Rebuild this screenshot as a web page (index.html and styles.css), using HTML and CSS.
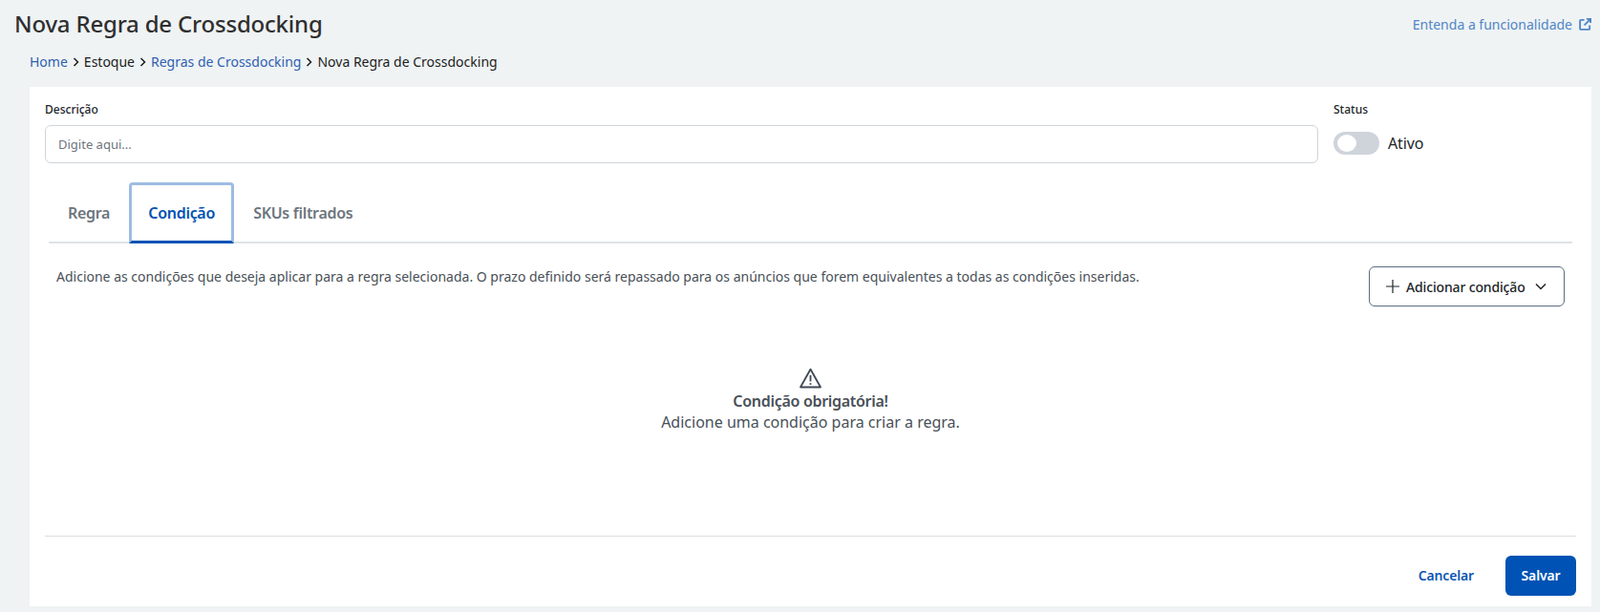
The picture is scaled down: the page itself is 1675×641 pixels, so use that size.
FILE: index.html
```html
<!DOCTYPE html>
<html lang="pt-BR">
<head>
<meta charset="utf-8">
<title>Nova Regra de Crossdocking</title>
<link rel="stylesheet" href="styles.css">
</head>
<body>
<header class="top">
  <h1 class="title">Nova Regra de Crossdocking</h1>
  <a class="help" href="#">Entenda a funcionalidade
    <svg class="help-icon" viewBox="0 0 14 14" width="13" height="13" fill="none" stroke="currentColor" stroke-width="2"><path d="M6 2H2.2a1 1 0 0 0-1 1v8.800a1 1 0 0 0 1 1H11a1 1 0 0 0 1-1V8"/><path d="M8.500 1h4.500v4.500M13 1 6 8"/></svg>
  </a>
</header>
<nav class="crumbs">
  <a href="#">Home</a>
  <svg class="sep" viewBox="1 0 6 10" width="7" height="10" fill="none" stroke="currentColor" stroke-width="1.500"><path d="m2 1 4 4-4 4"/></svg>
  <span>Estoque</span>
  <svg class="sep" viewBox="1 0 6 10" width="7" height="10" fill="none" stroke="currentColor" stroke-width="1.500"><path d="m2 1 4 4-4 4"/></svg>
  <a href="#">Regras de Crossdocking</a>
  <svg class="sep" viewBox="1 0 6 10" width="7" height="10" fill="none" stroke="currentColor" stroke-width="1.500"><path d="m2 1 4 4-4 4"/></svg>
  <span>Nova Regra de Crossdocking</span>
</nav>
<main class="card">
  <section class="fields">
    <div class="field-desc">
      <label class="label" for="d">Descrição</label>
      <input class="input" id="d" placeholder="Digite aqui...">
    </div>
    <div class="field-status">
      <span class="label">Status</span>
      <div class="status-row">
        <span class="toggle"><span class="knob"></span></span>
        <span class="status-text">Ativo</span>
      </div>
    </div>
  </section>
  <div class="tabs">
    <span class="tab">Regra</span>
    <span class="tab active">Condição</span>
    <span class="tab">SKUs filtrados</span>
  </div>
  <section class="info">
    <p class="info-text">Adicione as condições que deseja aplicar para a regra selecionada. O prazo definido será repassado para os anúncios que forem equivalentes a todas as condições inseridas.</p>
    <button class="add">
      <svg viewBox="0 0 14 14" width="14" height="14" fill="none" stroke="currentColor" stroke-width="1.200"><path d="M7 0v14M0 7h14"/></svg>
      <span class="add-text">Adicionar condição</span>
      <svg class="chev" viewBox="0 0 12 8" width="12" height="8" fill="none" stroke="currentColor" stroke-width="1.500"><path d="m1 1.500 5 5 5-5"/></svg>
    </button>
  </section>
  <section class="empty">
    <svg viewBox="0 0 24 22" width="25" height="22" fill="none" stroke="#3f4754" stroke-width="1.800"><path d="M12 1.800 1.500 20.500h21z" stroke-linejoin="round"/><path d="M12 8v6.500M12 16.200v1.800"/></svg>
    <strong class="empty-title">Condição obrigatória!</strong>
    <span class="empty-text">Adicione uma condição para criar a regra.</span>
  </section>
  <footer class="actions">
    <button class="cancel">Cancelar</button>
    <button class="save">Salvar</button>
  </footer>
</main>
</body>
</html>
```
FILE: styles.css
```css
* { box-sizing: border-box; }
html, body { height: 100%; }
body {
  margin: 0;
  background: #eff3f4;
  font-family: "Noto Sans", sans-serif;
  color: #212529;
  overflow: hidden;
}
a { text-decoration: none; }
.top {
  display: flex;
  justify-content: space-between;
  align-items: center;
  height: 50px;
  padding: 0 9px 0 15px;
}
.title {
  margin: 0;
  font-size: 24px;
  font-weight: 500;
  letter-spacing: -0.2px;
  line-height: 50px;
  color: #2f2f2f;
}
.help {
  display: flex;
  align-items: center;
  gap: 7px;
  font-size: 14px;
  color: #4f86c6;
}
.crumbs {
  display: flex;
  align-items: center;
  gap: 5px;
  height: 29px;
  padding-left: 31px;
  font-size: 14px;
  color: #1c1c1c;
}
.crumbs a { color: #2f5fb0; }
.sep { color: #1c1c1c; }
.card {
  margin: 12px 9px 0 31px;
  height: 544px;
  background: #fff;
  padding: 0 16px;
  display: flex;
  flex-direction: column;
}
.fields {
  display: flex;
  gap: 16px;
  padding-top: 14px;
}
.field-desc { width: 1333px; }
.label {
  display: block;
  height: 26px;
  font-size: 12px;
  font-weight: 500;
  line-height: 20px;
  color: #212529;
}
.input {
  display: block;
  width: 100%;
  height: 40px;
  border: 1px solid #ced4da;
  border-radius: 6px;
  padding: 0 13px;
  font: 13px "Noto Sans", sans-serif;
  outline: none;
}
.input::placeholder { color: #6c757d; opacity: 1; }
.status-row {
  display: flex;
  align-items: center;
  gap: 9px;
  height: 38px;
}
.toggle {
  width: 48px;
  height: 24px;
  border-radius: 12px;
  background: #ced4da;
  padding: 3px 4px;
}
.knob {
  display: block;
  width: 20px;
  height: 18px;
  border-radius: 50%;
  background: #fff;
}
.status-text { font-size: 16px; letter-spacing: -0.1px; color: #212529; }
.tabs {
  display: flex;
  height: 64px;
  margin: 20px 0 0 4px;
  width: 1595px;
  border-bottom: 2px solid #dee2e6;
}
.tab {
  padding: 0 20px;
  height: 64px;
  display: flex;
  align-items: center;
  font-size: 16px;
  font-weight: 600;
  letter-spacing: -0.3px;
  color: #6c757d;
}
.tab.active {
  width: 110px;
  justify-content: center;
  padding: 0;
  color: #0052b4;
  background: #fff;
  border: 3px solid #9dbce2;
  border-bottom: 3px solid #0052b4;
  border-radius: 4px 4px 0 0;
}
.info {
  display: flex;
  justify-content: space-between;
  align-items: flex-start;
  padding: 24px 12px 0 12px;
}
.info-text {
  margin: 0;
  font-size: 14px;
  line-height: 22px;
  color: #495057;
}
.add {
  display: flex;
  align-items: center;
  gap: 7px;
  flex: 0 0 205px;
  height: 42px;
  padding: 0 0 0 17px;
  background: #fff;
  border: 1px solid #5c6b82;
  border-radius: 6px;
  font: 500 14px "Noto Sans", sans-serif;
  letter-spacing: -0.15px;
  color: #212529;
}
.add-text { white-space: nowrap; }
.chev { margin-left: 3px; }
.empty {
  display: flex;
  flex-direction: column;
  align-items: center;
  padding-top: 64px;
  height: 240px;
}
.empty-title {
  font-size: 16px;
  font-weight: 600;
  letter-spacing: -0.3px;
  line-height: 22px;
  color: #495057;
  margin-top: 2px;
}
.empty-text {
  font-size: 16px;
  line-height: 22px;
  color: #495057;
}
.actions {
  display: flex;
  justify-content: flex-end;
  align-items: center;
  height: 62px;
  border-top: 1px solid #dedede;
  padding-top: 20px;
}
.cancel, .save {
  font: 600 14px "Noto Sans", sans-serif;
  letter-spacing: -0.15px;
  border: 0;
  cursor: pointer;
}
.cancel { background: none; color: #0f56b3; margin-right: 33px; padding: 0; }
.save {
  width: 74px;
  height: 42px;
  background: #0052b4;
  color: #fff;
  border-radius: 6px;
}
```
